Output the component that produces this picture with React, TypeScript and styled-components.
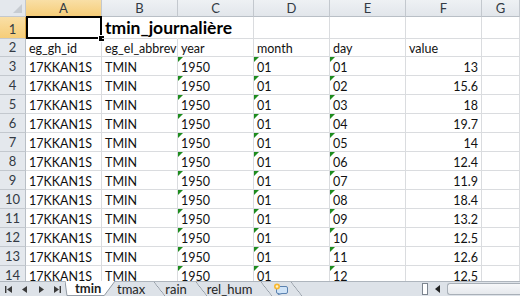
import styled, { createGlobalStyle } from 'styled-components';

const GlobalStyle = createGlobalStyle`
  html, body {
    margin: 0;
    padding: 0;
    background: #ffffff;
  }
  body {
    font-family: Lato, "Noto Sans", sans-serif;
    color: #000;
  }
`;

type Row = {
  id: string;
  abbrev: string;
  year: string;
  month: string;
  day: string;
  value: string;
};

const values = ['13', '15.6', '18', '19.7', '14', '12.4', '11.9', '18.4', '13.2', '12.5', '12.6', '12.5'];

const rows: Row[] = values.map((value, i) => ({
  id: '17KKAN1S',
  abbrev: 'TMIN',
  year: '1950',
  month: '01',
  day: String(i + 1).padStart(2, '0'),
  value,
}));

const columns = ['A', 'B', 'C', 'D', 'E', 'F', 'G'];

export default function App() {
  return (
    <>
      <GlobalStyle />
      <Window>
        <Sheet>
          <Corner />
          {columns.map((c) => (
            <ColHeader key={c} $selected={c === 'A'}>
              {c}
            </ColHeader>
          ))}

          <RowHeader $selected>1</RowHeader>
          <Cell $active>
            <FillHandle />
          </Cell>
          <Cell $overflow>
            <Title>tmin_journalière</Title>
          </Cell>
          <Cell />
          <Cell />
          <Cell />
          <Cell />
          <Cell />

          <RowHeader>2</RowHeader>
          <Cell>eg_gh_id</Cell>
          <Cell>eg_el_abbrev</Cell>
          <Cell>year</Cell>
          <Cell>month</Cell>
          <Cell>day</Cell>
          <Cell>value</Cell>
          <Cell />

          {rows.map((r, i) => (
            <Line key={i} row={r} index={i + 3} />
          ))}
        </Sheet>

        <TabBar>
          <NavButtons>
            <NavIcon>
              <svg width="8" height="7" viewBox="0 0 8 7">
                <rect x="0" y="0" width="1.4" height="7" fill="#3b3b3b" />
                <path d="M7 0 L2 3.5 L7 7 Z" fill="#3b3b3b" />
              </svg>
            </NavIcon>
            <NavIcon>
              <svg width="6" height="7" viewBox="0 0 6 7">
                <path d="M5 0 L0 3.5 L5 7 Z" fill="#3b3b3b" />
              </svg>
            </NavIcon>
            <NavIcon>
              <svg width="6" height="7" viewBox="0 0 6 7">
                <path d="M1 0 L6 3.5 L1 7 Z" fill="#3b3b3b" />
              </svg>
            </NavIcon>
            <NavIcon>
              <svg width="8" height="7" viewBox="0 0 8 7">
                <path d="M1 0 L6 3.5 L1 7 Z" fill="#3b3b3b" />
                <rect x="6.6" y="0" width="1.4" height="7" fill="#3b3b3b" />
              </svg>
            </NavIcon>
          </NavButtons>

          <Tabs>
            <ActiveTab>
              <TabShape viewBox="0 0 53 16" preserveAspectRatio="none">
                <path d="M0 0 L2 15.5 L40 15.5 L51 0" fill="#ffffff" stroke="#8e96a0" strokeWidth="1" />
              </TabShape>
              <TabLabel>tmin</TabLabel>
            </ActiveTab>
            <Tab>tmax</Tab>
            <Slash />
            <Tab>rain</Tab>
            <Slash />
            <Tab>rel_hum</Tab>
            <Slash />
            <InsertTab>
              <svg width="16" height="12" viewBox="0 0 16 12">
                <rect x="3.5" y="3.5" width="11" height="7" rx="1.5" fill="#cfe3f7" stroke="#5b82b0" />
                <path d="M6 10.5 L5 12 L9 10.5" fill="#cfe3f7" stroke="#5b82b0" strokeWidth="0.8" />
                <circle cx="4" cy="3.5" r="3" fill="#f7b733" />
                <circle cx="4" cy="3.5" r="1.3" fill="#fff4c8" />
              </svg>
            </InsertTab>
            <Slash />
          </Tabs>

          <Spacer />
          <SplitBox />
          <ScrollArrow>
            <svg width="5" height="8" viewBox="0 0 5 8">
              <path d="M5 0 L0 4 L5 8 Z" fill="#222" />
            </svg>
          </ScrollArrow>
          <Track>
            <Thumb />
          </Track>
        </TabBar>
      </Window>
    </>
  );
}

const Line: React.FC<{ row: Row; index: number }> = ({ row, index }) => (
  <>
    <RowHeader>{index}</RowHeader>
    <Cell>{row.id}</Cell>
    <Cell>{row.abbrev}</Cell>
    <Cell $flag>{row.year}</Cell>
    <Cell $flag>{row.month}</Cell>
    <Cell $flag>{row.day}</Cell>
    <Cell $right>{row.value}</Cell>
    <Cell />
  </>
);

const Window = styled.div`
  width: 520px;
  height: 296px;
  display: flex;
  flex-direction: column;
  overflow: hidden;
  background: #fff;
`;

const Sheet = styled.div`
  flex: 1;
  min-height: 0;
  overflow: hidden;
  display: grid;
  grid-template-columns: 26px repeat(6, 76px) 38px;
  grid-template-rows: 17px 22px 18px repeat(12, 19px);
  font-size: 12.5px;
`;

const Corner = styled.div`
  position: relative;
  box-sizing: border-box;
  background: #e4e8ed;
  border-right: 1px solid #c3c8ce;
  border-bottom: 1px solid #c3c8ce;

  &::after {
    content: '';
    position: absolute;
    right: 3px;
    bottom: 3px;
    width: 0;
    height: 0;
    border-left: 9px solid transparent;
    border-bottom: 9px solid #c7ccd2;
  }
`;

const ColHeader = styled.div<{ $selected?: boolean }>`
  box-sizing: border-box;
  display: flex;
  align-items: center;
  justify-content: center;
  background: ${(p) =>
    p.$selected ? 'linear-gradient(#f9dfa6, #f6cd78)' : 'linear-gradient(#eef1f4, #e2e6eb)'};
  border-right: 1px solid #c3c8ce;
  border-bottom: 1px solid ${(p) => (p.$selected ? '#d9a441' : '#b9bfc6')};
  color: #333a44;
  font-size: 13px;
`;

const RowHeader = styled.div<{ $selected?: boolean }>`
  box-sizing: border-box;
  display: flex;
  align-items: flex-end;
  justify-content: center;
  padding-bottom: 2px;
  line-height: 1;
  background: ${(p) => (p.$selected ? 'linear-gradient(#f9dfa6, #f6cd78)' : '#e4e8ed')};
  border-right: 1px solid ${(p) => (p.$selected ? '#d9a441' : '#b9bfc6')};
  border-bottom: 1px solid #c3c8ce;
  color: #333a44;
  font-size: 13px;
`;

const Cell = styled.div<{ $flag?: boolean; $right?: boolean; $active?: boolean; $overflow?: boolean }>`
  position: relative;
  box-sizing: border-box;
  display: flex;
  align-items: flex-end;
  justify-content: ${(p) => (p.$right ? 'flex-end' : 'flex-start')};
  padding: 0 3px 1px 3px;
  line-height: 1;
  border-right: 1px solid ${(p) => (p.$overflow ? 'transparent' : '#dadcdf')};
  border-bottom: 1px solid #dadcdf;
  white-space: nowrap;
  overflow: ${(p) => (p.$overflow || p.$active ? 'visible' : 'hidden')};
  z-index: ${(p) => (p.$overflow || p.$active ? 2 : 'auto')};
  color: #111;

  ${(p) =>
    p.$flag &&
    `
    &::before {
      content: '';
      position: absolute;
      left: 0;
      top: 0;
      border-top: 5px solid #1e8c1e;
      border-right: 5px solid transparent;
    }
  `}

  ${(p) =>
    p.$active &&
    `
    &::after {
      content: '';
      position: absolute;
      left: 0;
      top: -1px;
      right: -1px;
      bottom: -1px;
      border: 2px solid #000;
    }
  `}
`;

const FillHandle = styled.span`
  position: absolute;
  right: -4px;
  bottom: -4px;
  width: 5px;
  height: 5px;
  background: #000;
  border: 1px solid #fff;
  z-index: 3;
`;

const Title = styled.span`
  font-weight: 700;
  font-size: 17.5px;
  line-height: 1;
  padding-bottom: 1px;
  color: #000;
`;

const TabBar = styled.div`
  height: 15px;
  flex: none;
  box-sizing: border-box;
  display: flex;
  align-items: stretch;
  background: #dde2e8;
  border-top: 1px solid #aeb5bd;
  font-size: 13px;
  color: #1f1f1f;
`;

const NavButtons = styled.div`
  display: flex;
  align-items: center;
  width: 65px;
  box-sizing: border-box;
  padding-left: 5px;
  gap: 8px;
`;

const NavIcon = styled.span`
  display: flex;
  width: 8px;
  justify-content: center;
`;

const Tabs = styled.div`
  display: flex;
  align-items: stretch;
`;

const ActiveTab = styled.div`
  position: relative;
  display: flex;
  align-items: center;
  width: 52px;
  margin-top: -1px;
  box-sizing: border-box;
  padding-left: 10px;
  font-weight: 700;
`;

const TabShape = styled.svg`
  position: absolute;
  inset: 0;
  width: 100%;
  height: 100%;
`;

const TabLabel = styled.span`
  position: relative;
  line-height: 1;
`;

const Tab = styled.div`
  display: flex;
  align-items: center;
  padding: 0 9px 0 0;
  line-height: 1;
`;

const InsertTab = styled.div`
  display: flex;
  align-items: center;
  padding: 0 2px 0 1px;
`;

const Slash = styled.span`
  width: 11px;
  align-self: stretch;
  background: linear-gradient(
    to top right,
    transparent calc(50% - 0.6px),
    #8e96a0 50%,
    transparent calc(50% + 0.6px)
  );
`;

const Spacer = styled.div`
  flex: 1;
`;

const SplitBox = styled.div`
  width: 4px;
  height: 10px;
  align-self: center;
  border: 1px solid #7d858f;
  background: #fff;
  margin-right: 7px;
`;

const ScrollArrow = styled.div`
  display: flex;
  align-items: center;
  padding-right: 7px;
`;

const Track = styled.div`
  width: 73px;
  display: flex;
  align-items: stretch;
  padding: 1px 0;
`;

const Thumb = styled.div`
  flex: 1;
  background: linear-gradient(#f6f7f9, #e6e9ed);
  border: 1px solid #a9b0b8;
  border-right: none;
  border-radius: 3px 0 0 3px;
`;
